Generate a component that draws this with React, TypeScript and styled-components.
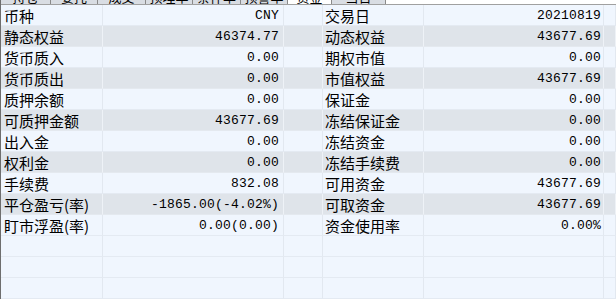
import { createGlobalStyle, styled } from 'styled-components'

const GlobalStyle = createGlobalStyle`
	html, body {
		margin: 0;
		padding: 0;
		background: #ffffff;
		overflow: hidden;
	}
`

const Page = styled.div`
	width: 616px;
	height: 299px;
	overflow: hidden;
	background: #f0f6fe;
	border-left: 1px solid #6e6e6e;
	box-sizing: border-box;
`

const TabStrip = styled.div`
	display: flex;
	height: 5px;
	overflow: hidden;
	background: #ffffff;
	border-bottom: 1px solid #a0a0a0;
	box-sizing: border-box;
`

const Tab = styled.div<{ $w: number; $active?: boolean }>`
	width: ${(p) => p.$w}px;
	flex: none;
	height: 5px;
	overflow: hidden;
	box-sizing: border-box;
	border-right: 1px solid #8a8a8a;
	background: ${(p) => (p.$active ? '#ffffff' : '#d9dde3')};
	font-family: 'Noto Sans CJK SC', sans-serif;
	font-size: 13px;
	line-height: 13px;
	text-align: center;
	color: #000;

	span {
		display: block;
		margin-top: -10px;
	}
`

const Table = styled.div`
	display: grid;
	grid-template-columns: 102px 181px 39px 101px 180px 1fr;
	grid-auto-rows: 21px;
`

const Cell = styled.div<{ $gray: boolean; $align?: 'left' | 'right'; $mono?: boolean; $pad?: number }>`
	display: flex;
	align-items: center;
	justify-content: ${(p) => (p.$align === 'right' ? 'flex-end' : 'flex-start')};
	padding: 0 ${(p) => (p.$align === 'right' ? p.$pad ?? 4 : 0)}px 0 ${(p) => (p.$align === 'right' ? 0 : p.$pad ?? 3)}px;
	background: ${(p) => (p.$gray ? '#dfe4ea' : '#f0f6fe')};
	border-right: 1px solid ${(p) => (p.$gray ? '#eef2f7' : '#e2e8f0')};
	border-bottom: 1px solid ${(p) => (p.$gray ? '#e4e9ef' : '#e4eaf2')};
	box-sizing: border-box;
	white-space: nowrap;
	color: #000;
	font-family: ${(p) => (p.$mono ? "'Liberation Mono', monospace" : "'Noto Sans CJK SC', sans-serif")};
	font-size: ${(p) => (p.$mono ? 13 : 15)}px;
	letter-spacing: ${(p) => (p.$mono ? '0.2px' : '0')};
`

const tabs: [string, number, boolean?][] = [
	['持仓', 50],
	['委托', 47],
	['成交', 48],
	['预埋单', 47],
	['条件单', 48],
	['预警单', 47],
	['资金', 44, true],
	['当日', 54],
]

const rows: [string, string, string, string][] = [
	['币种', 'CNY', '交易日', '20210819'],
	['静态权益', '46374.77', '动态权益', '43677.69'],
	['货币质入', '0.00', '期权市值', '0.00'],
	['货币质出', '0.00', '市值权益', '43677.69'],
	['质押余额', '0.00', '保证金', '0.00'],
	['可质押金额', '43677.69', '冻结保证金', '0.00'],
	['出入金', '0.00', '冻结资金', '0.00'],
	['权利金', '0.00', '冻结手续费', '0.00'],
	['手续费', '832.08', '可用资金', '43677.69'],
	['平仓盈亏(率)', '-1865.00(-4.02%)', '可取资金', '43677.69'],
	['盯市浮盈(率)', '0.00(0.00)', '资金使用率', '0.00%'],
	['', '', '', ''],
	['', '', '', ''],
	['', '', '', ''],
]

export default function App() {
	return (
		<>
			<GlobalStyle />
			<Page>
				<TabStrip>
					{tabs.map(([t, w, a]) => (
						<Tab key={t} $w={w} $active={a}>
							<span>{t}</span>
						</Tab>
					))}
				</TabStrip>
				<Table>
					{rows.map((r, i) => {
						const gray = i % 2 === 1 && i < 11
						return [
							<Cell key={`a${i}`} $gray={gray}>{r[0]}</Cell>,
							<Cell key={`b${i}`} $gray={gray} $align="right" $mono>{r[1]}</Cell>,
							<Cell key={`c${i}`} $gray={gray} />,
							<Cell key={`d${i}`} $gray={gray} $pad={2}>{r[2]}</Cell>,
							<Cell key={`e${i}`} $gray={gray} $align="right" $mono $pad={2}>{r[3]}</Cell>,
							<Cell key={`f${i}`} $gray={gray} />,
						]
					})}
				</Table>
			</Page>
		</>
	)
}
